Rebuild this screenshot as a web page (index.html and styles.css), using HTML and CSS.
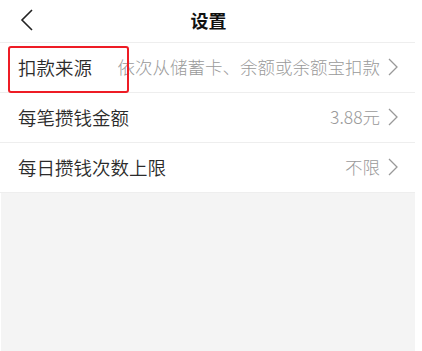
FILE: index.html
```html
<!DOCTYPE html>
<html lang="zh">
<head>
<meta charset="utf-8">
<title>设置</title>
<link rel="stylesheet" href="styles.css">
</head>
<body>
<div class="page">
  <header class="header">
    <span class="back">
      <svg width="14" height="22" viewBox="0 0 14 22"><path d="M12 1 L2 11 L12 21" fill="none" stroke="#222" stroke-width="1.6"/></svg>
    </span>
    <h1 class="title">设置</h1>
  </header>
  <ul class="list">
    <li class="row">
      <span class="label highlight">扣款来源</span>
      <span class="value">依次从储蓄卡、余额或余额宝扣款</span>
      <svg class="chev" width="10" height="18" viewBox="0 0 10 18"><path d="M1 1 L9 9 L1 17" fill="none" stroke="#999" stroke-width="1.3"/></svg>
    </li>
    <li class="row">
      <span class="label">每笔攒钱金额</span>
      <span class="value">3.88元</span>
      <svg class="chev" width="10" height="18" viewBox="0 0 10 18"><path d="M1 1 L9 9 L1 17" fill="none" stroke="#999" stroke-width="1.3"/></svg>
    </li>
    <li class="row">
      <span class="label">每日攒钱次数上限</span>
      <span class="value">不限</span>
      <svg class="chev" width="10" height="18" viewBox="0 0 10 18"><path d="M1 1 L9 9 L1 17" fill="none" stroke="#999" stroke-width="1.3"/></svg>
    </li>
  </ul>
  <div class="fill"></div>
</div>
</body>
</html>
```
FILE: styles.css
```css
* { box-sizing: border-box; margin: 0; padding: 0; }
html, body { height: 100%; background: #fff; }
body {
  font-family: "Noto Sans CJK SC", "Noto Sans", sans-serif;
  color: #333;
}
.page {
  width: 415px;
  height: 100%;
  display: flex;
  flex-direction: column;
}
.header {
  height: 43px;
  display: flex;
  align-items: center;
  justify-content: center;
  position: relative;
  border-bottom: 1px solid #eeeeee;
  padding-bottom: 3px;
}
.back {
  position: absolute;
  left: 20px;
  top: 9px;
  display: flex;
}
.title {
  font-size: 18px;
  font-weight: 700;
  color: #111;
  margin-left: 2px;
}
.list { list-style: none; }
.row {
  height: 50px;
  display: flex;
  align-items: center;
  padding: 0 17px 2px 18px;
  border-bottom: 1px solid #eeeeee;
  position: relative;
}
.label {
  font-size: 18.5px;
  font-weight: 350;
  color: #2b2b2b;
  flex: 1;
  white-space: nowrap;
}
.highlight::before {
  content: "";
  position: absolute;
  left: 8px;
  top: 3px;
  width: 117px;
  height: 43px;
  border: 2px solid #ee1c25;
  border-radius: 3px;
}
.value {
  font-size: 17.5px;
  font-weight: 300;
  color: #9a9a9a;
  white-space: nowrap;
  margin-right: 8px;
}
.chev { display: block; }
.fill {
  flex: 1;
  background: #f4f4f4;
  margin-left: 1px;
}
```
